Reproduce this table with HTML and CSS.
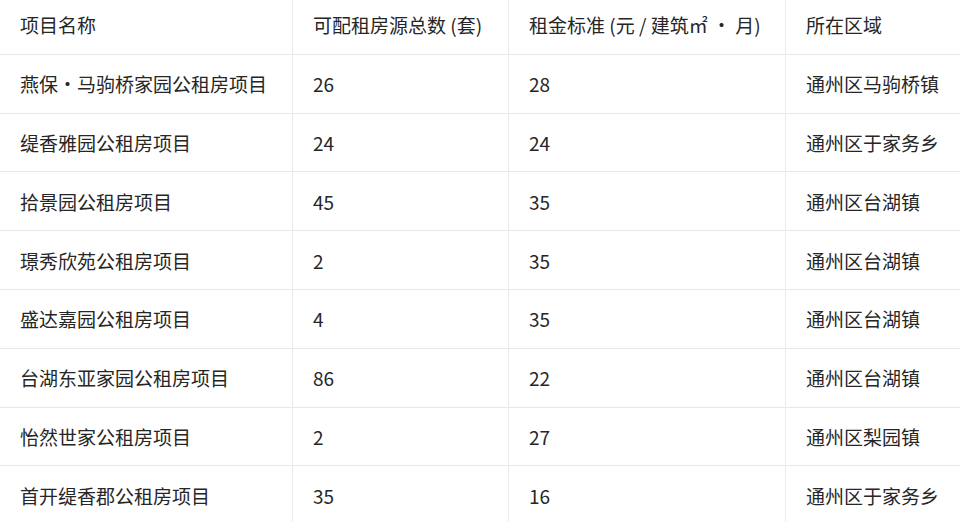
FILE: index.html
```html
<!DOCTYPE html>
<html lang="zh-CN">
<head>
<meta charset="utf-8">
<title>公租房项目</title>
<link rel="stylesheet" href="styles.css">
</head>
<body>
<div class="viewport">
  <div class="table">
    <div class="cell head">项目名称</div>
    <div class="cell head">可配租房源总数 (套)</div>
    <div class="cell head">租金标准 (元 / 建筑㎡ · 月)</div>
    <div class="cell head last">所在区域</div>

    <div class="cell">燕保·马驹桥家园公租房项目</div>
    <div class="cell">26</div>
    <div class="cell">28</div>
    <div class="cell last">通州区马驹桥镇</div>

    <div class="cell">缇香雅园公租房项目</div>
    <div class="cell">24</div>
    <div class="cell">24</div>
    <div class="cell last">通州区于家务乡</div>

    <div class="cell">拾景园公租房项目</div>
    <div class="cell">45</div>
    <div class="cell">35</div>
    <div class="cell last">通州区台湖镇</div>

    <div class="cell">璟秀欣苑公租房项目</div>
    <div class="cell">2</div>
    <div class="cell">35</div>
    <div class="cell last">通州区台湖镇</div>

    <div class="cell">盛达嘉园公租房项目</div>
    <div class="cell">4</div>
    <div class="cell">35</div>
    <div class="cell last">通州区台湖镇</div>

    <div class="cell">台湖东亚家园公租房项目</div>
    <div class="cell">86</div>
    <div class="cell">22</div>
    <div class="cell last">通州区台湖镇</div>

    <div class="cell">怡然世家公租房项目</div>
    <div class="cell">2</div>
    <div class="cell">27</div>
    <div class="cell last">通州区梨园镇</div>

    <div class="cell">首开缇香郡公租房项目</div>
    <div class="cell">35</div>
    <div class="cell">16</div>
    <div class="cell last">通州区于家务乡</div>
  </div>
</div>
</body>
</html>
```

FILE: styles.css
```css
html, body {
  margin: 0;
  padding: 0;
  background: #ffffff;
}

.viewport {
  width: 960px;
  height: 522px;
  overflow: hidden;
}

.table {
  display: grid;
  grid-template-columns: 293px 216px 277px 220px;
  grid-auto-rows: 58.8px;
  margin-top: -4px;
  font-family: "Noto Sans CJK SC", "Noto Sans", sans-serif;
  font-size: 19px;
  color: #262626;
}

.cell {
  box-sizing: border-box;
  display: flex;
  align-items: center;
  padding: 0 20px 0 20px;
  border-bottom: 1px solid #e8e8e8;
  border-right: 1px solid #ebebeb;
  white-space: nowrap;
}
```
